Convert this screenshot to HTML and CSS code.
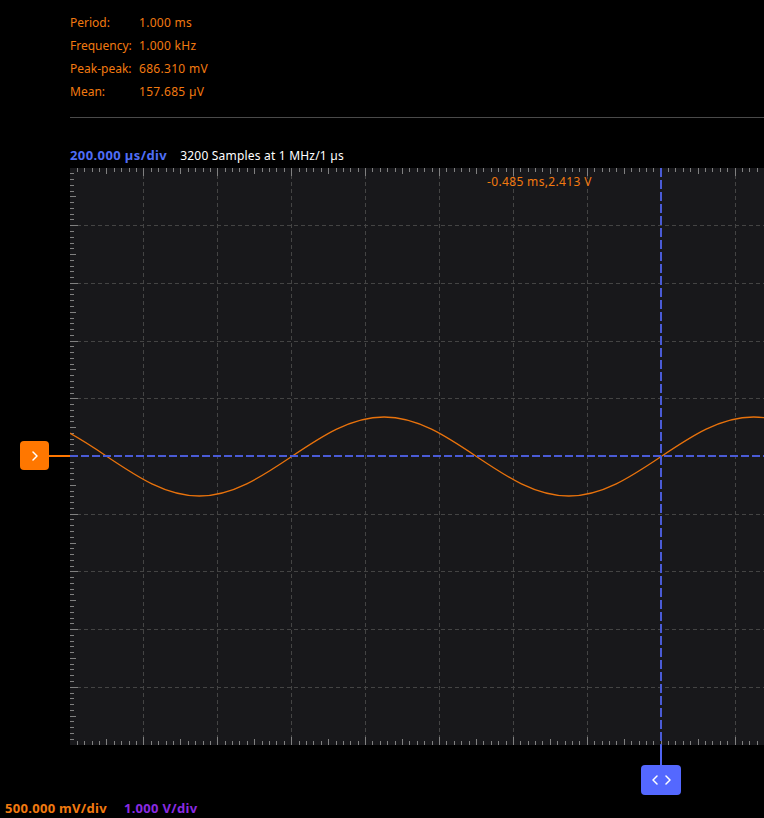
FILE: index.html
```html
<!DOCTYPE html>
<html>
<head>
<meta charset="utf-8">
<link rel="stylesheet" href="styles.css">
</head>
<body>
<div class="app">
  <dl class="measures">
    <dt>Period:</dt><dd>1.000 ms</dd>
    <dt>Frequency:</dt><dd>1.000 kHz</dd>
    <dt>Peak-peak:</dt><dd>686.310 mV</dd>
    <dt>Mean:</dt><dd>157.685 µV</dd>
  </dl>
  <div class="sep"></div>
  <div class="scale-row">
    <span class="tdiv">200.000 µs/div</span>
    <span class="samples">3200 Samples at 1 MHz/1 µs</span>
  </div>
  <div class="scope">
    <svg class="plot" width="764" height="630" viewBox="0 0 764 630">
      <defs>
        <clipPath id="pc"><rect x="70" y="0" width="694" height="577"/></clipPath>
      </defs>
      <rect class="bg" x="70" y="0" width="694" height="577"/>
      <path class="grid" d="M143.9,0V577 M217.8,0V577 M291.7,0V577 M365.6,0V577 M439.5,0V577 M513.4,0V577 M587.3,0V577 M735.1,0V577"/>
      <path class="grid" d="M70,57.7H764 M70,115.4H764 M70,173.1H764 M70,230.8H764 M70,346.2H764 M70,403.9H764 M70,461.6H764 M70,519.3H764"/>
      <path class="ticks" d="M70,0
        m7.39,0 v4 m7.39,-4 v4 m7.39,-4 v4 m7.39,-4 v4 m7.39,-4 v6 m7.39,-6 v4 m7.39,-4 v4 m7.39,-4 v4 m7.39,-4 v4 m7.39,-4 v8 m0,-8
        m7.39,0 v4 m7.39,-4 v4 m7.39,-4 v4 m7.39,-4 v4 m7.39,-4 v6 m7.39,-6 v4 m7.39,-4 v4 m7.39,-4 v4 m7.39,-4 v4 m7.39,-4 v8 m0,-8
        m7.39,0 v4 m7.39,-4 v4 m7.39,-4 v4 m7.39,-4 v4 m7.39,-4 v6 m7.39,-6 v4 m7.39,-4 v4 m7.39,-4 v4 m7.39,-4 v4 m7.39,-4 v8 m0,-8
        m7.39,0 v4 m7.39,-4 v4 m7.39,-4 v4 m7.39,-4 v4 m7.39,-4 v6 m7.39,-6 v4 m7.39,-4 v4 m7.39,-4 v4 m7.39,-4 v4 m7.39,-4 v8 m0,-8
        m7.39,0 v4 m7.39,-4 v4 m7.39,-4 v4 m7.39,-4 v4 m7.39,-4 v6 m7.39,-6 v4 m7.39,-4 v4 m7.39,-4 v4 m7.39,-4 v4 m7.39,-4 v8 m0,-8
        m7.39,0 v4 m7.39,-4 v4 m7.39,-4 v4 m7.39,-4 v4 m7.39,-4 v6 m7.39,-6 v4 m7.39,-4 v4 m7.39,-4 v4 m7.39,-4 v4 m7.39,-4 v8 m0,-8
        m7.39,0 v4 m7.39,-4 v4 m7.39,-4 v4 m7.39,-4 v4 m7.39,-4 v6 m7.39,-6 v4 m7.39,-4 v4 m7.39,-4 v4 m7.39,-4 v4 m7.39,-4 v8 m0,-8
        m7.39,0 v4 m7.39,-4 v4 m7.39,-4 v4 m7.39,-4 v4 m7.39,-4 v6 m7.39,-6 v4 m7.39,-4 v4 m7.39,-4 v4 m7.39,-4 v4 m7.39,-4 v8 m0,-8
        m7.39,0 v4 m7.39,-4 v4 m7.39,-4 v4 m7.39,-4 v4 m7.39,-4 v6 m7.39,-6 v4 m7.39,-4 v4 m7.39,-4 v4 m7.39,-4 v4 m7.39,-4 v8 m0,-8
        m7.39,0 v4 m7.39,-4 v4 m7.39,-4 v4 m7.39,-4 v4"/>
      <path class="ticks" d="M70,577
        m7.39,0 v-4 m7.39,4 v-4 m7.39,4 v-4 m7.39,4 v-4 m7.39,4 v-6 m7.39,6 v-4 m7.39,4 v-4 m7.39,4 v-4 m7.39,4 v-4 m7.39,4 v-8 m0,8
        m7.39,0 v-4 m7.39,4 v-4 m7.39,4 v-4 m7.39,4 v-4 m7.39,4 v-6 m7.39,6 v-4 m7.39,4 v-4 m7.39,4 v-4 m7.39,4 v-4 m7.39,4 v-8 m0,8
        m7.39,0 v-4 m7.39,4 v-4 m7.39,4 v-4 m7.39,4 v-4 m7.39,4 v-6 m7.39,6 v-4 m7.39,4 v-4 m7.39,4 v-4 m7.39,4 v-4 m7.39,4 v-8 m0,8
        m7.39,0 v-4 m7.39,4 v-4 m7.39,4 v-4 m7.39,4 v-4 m7.39,4 v-6 m7.39,6 v-4 m7.39,4 v-4 m7.39,4 v-4 m7.39,4 v-4 m7.39,4 v-8 m0,8
        m7.39,0 v-4 m7.39,4 v-4 m7.39,4 v-4 m7.39,4 v-4 m7.39,4 v-6 m7.39,6 v-4 m7.39,4 v-4 m7.39,4 v-4 m7.39,4 v-4 m7.39,4 v-8 m0,8
        m7.39,0 v-4 m7.39,4 v-4 m7.39,4 v-4 m7.39,4 v-4 m7.39,4 v-6 m7.39,6 v-4 m7.39,4 v-4 m7.39,4 v-4 m7.39,4 v-4 m7.39,4 v-8 m0,8
        m7.39,0 v-4 m7.39,4 v-4 m7.39,4 v-4 m7.39,4 v-4 m7.39,4 v-6 m7.39,6 v-4 m7.39,4 v-4 m7.39,4 v-4 m7.39,4 v-4 m7.39,4 v-8 m0,8
        m7.39,0 v-4 m7.39,4 v-4 m7.39,4 v-4 m7.39,4 v-4 m7.39,4 v-6 m7.39,6 v-4 m7.39,4 v-4 m7.39,4 v-4 m7.39,4 v-4 m7.39,4 v-8 m0,8
        m7.39,0 v-4 m7.39,4 v-4 m7.39,4 v-4 m7.39,4 v-4 m7.39,4 v-6 m7.39,6 v-4 m7.39,4 v-4 m7.39,4 v-4 m7.39,4 v-4 m7.39,4 v-8 m0,8
        m7.39,0 v-4 m7.39,4 v-4 m7.39,4 v-4 m7.39,4 v-4"/>
      <path class="ticks" d="M70,0
        m0,5.77 h4 m-4,5.77 h4 m-4,5.77 h4 m-4,5.77 h4 m-4,5.77 h6 m-6,5.77 h4 m-4,5.77 h4 m-4,5.77 h4 m-4,5.77 h4 m-4,5.77 h8 m-8,0
        m0,5.77 h4 m-4,5.77 h4 m-4,5.77 h4 m-4,5.77 h4 m-4,5.77 h6 m-6,5.77 h4 m-4,5.77 h4 m-4,5.77 h4 m-4,5.77 h4 m-4,5.77 h8 m-8,0
        m0,5.77 h4 m-4,5.77 h4 m-4,5.77 h4 m-4,5.77 h4 m-4,5.77 h6 m-6,5.77 h4 m-4,5.77 h4 m-4,5.77 h4 m-4,5.77 h4 m-4,5.77 h8 m-8,0
        m0,5.77 h4 m-4,5.77 h4 m-4,5.77 h4 m-4,5.77 h4 m-4,5.77 h6 m-6,5.77 h4 m-4,5.77 h4 m-4,5.77 h4 m-4,5.77 h4 m-4,5.77 h8 m-8,0
        m0,5.77 h4 m-4,5.77 h4 m-4,5.77 h4 m-4,5.77 h4 m-4,5.77 h6 m-6,5.77 h4 m-4,5.77 h4 m-4,5.77 h4 m-4,5.77 h4 m-4,5.77 h8 m-8,0
        m0,5.77 h4 m-4,5.77 h4 m-4,5.77 h4 m-4,5.77 h4 m-4,5.77 h6 m-6,5.77 h4 m-4,5.77 h4 m-4,5.77 h4 m-4,5.77 h4 m-4,5.77 h8 m-8,0
        m0,5.77 h4 m-4,5.77 h4 m-4,5.77 h4 m-4,5.77 h4 m-4,5.77 h6 m-6,5.77 h4 m-4,5.77 h4 m-4,5.77 h4 m-4,5.77 h4 m-4,5.77 h8 m-8,0
        m0,5.77 h4 m-4,5.77 h4 m-4,5.77 h4 m-4,5.77 h4 m-4,5.77 h6 m-6,5.77 h4 m-4,5.77 h4 m-4,5.77 h4 m-4,5.77 h4 m-4,5.77 h8 m-8,0
        m0,5.77 h4 m-4,5.77 h4 m-4,5.77 h4 m-4,5.77 h4 m-4,5.77 h6 m-6,5.77 h4 m-4,5.77 h4 m-4,5.77 h4 m-4,5.77 h4 m-4,5.77 h8 m-8,0
        m0,5.77 h4 m-4,5.77 h4 m-4,5.77 h4 m-4,5.77 h4 m-4,5.77 h6 m-6,5.77 h4 m-4,5.77 h4 m-4,5.77 h4 m-4,5.77 h4"/>
      <g clip-path="url(#pc)">
        <path class="wave" d="M-77.8,288.5
          c30.13,-20.24 58.95,-39.5 92.375,-39.5 c33.42,0 62.24,19.26 92.375,39.5 c30.13,20.24 58.95,39.5 92.375,39.5 c33.42,0 62.24,-19.26 92.375,-39.5
          c30.13,-20.24 58.95,-39.5 92.375,-39.5 c33.42,0 62.24,19.26 92.375,39.5 c30.13,20.24 58.95,39.5 92.375,39.5 c33.42,0 62.24,-19.26 92.375,-39.5
          c30.13,-20.24 58.95,-39.5 92.375,-39.5 c33.42,0 62.24,19.26 92.375,39.5 c30.13,20.24 58.95,39.5 92.375,39.5 c33.42,0 62.24,-19.26 92.375,-39.5"/>
      </g>
      <path class="hcursor" d="M70,288H764"/>
      <path class="trig-line" d="M48,288H70"/>
      <path class="vcursor" d="M661,0V577"/>
      <path class="vcursor-solid" d="M661,577V598"/>
    </svg>
    <span class="readout">-0.485 ms,2.413 V</span>
    <button class="trig-marker" type="button" aria-label="Trigger level">
      <svg width="6" height="10" viewBox="0 0 6 10"><path d="M1,1 L5,5 L1,9"/></svg>
    </button>
    <button class="cursor-handle" type="button" aria-label="Time cursor">
      <svg width="6" height="10" viewBox="0 0 6 10"><path d="M5,1 L1,5 L5,9"/></svg>
      <svg width="6" height="10" viewBox="0 0 6 10"><path d="M1,1 L5,5 L1,9"/></svg>
    </button>
  </div>
  <div class="vdiv-row">
    <span class="ch1">500.000 mV/div</span>
    <span class="ch2">1.000 V/div</span>
  </div>
</div>
</body>
</html>
```
FILE: styles.css
```css
html, body {
  margin: 0;
  padding: 0;
  background: #000;
}
body {
  width: 764px;
  height: 818px;
  overflow: hidden;
  font-family: "Noto Sans", "Open Sans", sans-serif;
  font-size: 12px;
  color: #fff;
}
.app {
  display: flex;
  flex-direction: column;
}
.measures {
  margin: 0;
  padding: 11px 0 0 70px;
  display: grid;
  grid-template-columns: 69px auto;
  line-height: 23px;
  color: #f27a10;
}
.measures dt, .measures dd {
  margin: 0;
}
.measures dd {
  letter-spacing: 0.3px;
}
.sep {
  margin: 14px 0 0 70px;
  height: 1px;
  background: #4a4a4a;
}
.scale-row {
  margin-top: 29px;
  padding-left: 70px;
  height: 16px;
  display: flex;
  align-items: baseline;
  gap: 13px;
  line-height: 16px;
}
.tdiv {
  font-size: 13px;
  letter-spacing: 0.4px;
  font-weight: 700;
  color: #4f6ef7;
}
.samples {
  letter-spacing: 0.2px;
  color: #fff;
}
.scope {
  position: relative;
  margin-top: 5px;
  height: 630px;
}
.plot {
  display: block;
}
.plot .bg {
  fill: #18181b;
}
.plot .grid {
  fill: none;
  stroke: #444;
  stroke-width: 1;
  stroke-dasharray: 4 3;
  shape-rendering: crispEdges;
}
.plot .ticks {
  fill: none;
  stroke: #808080;
  stroke-width: 1;
  shape-rendering: crispEdges;
}
.plot .wave {
  fill: none;
  stroke: #e8720c;
  stroke-width: 1.3;
}
.plot .hcursor {
  fill: none;
  stroke: #4a5bd6;
  stroke-width: 2;
  stroke-dasharray: 8 3;
}
.plot .vcursor {
  fill: none;
  stroke: #4a5bd6;
  stroke-width: 2;
  stroke-dasharray: 9 3;
}
.plot .vcursor-solid {
  fill: none;
  stroke: #4f63f2;
  stroke-width: 2;
}
.plot .trig-line {
  fill: none;
  stroke: #ff7700;
  stroke-width: 2;
}
.readout {
  position: absolute;
  left: 487px;
  top: 6px;
  line-height: 16px;
  letter-spacing: 0.35px;
  color: #f27a10;
}
.trig-marker {
  position: absolute;
  left: 20px;
  top: 273px;
  width: 29px;
  height: 29px;
  padding: 0;
  border: none;
  border-radius: 4px;
  background: #ff7700;
  display: flex;
  align-items: center;
  justify-content: center;
}
.cursor-handle {
  position: absolute;
  left: 641px;
  top: 597px;
  width: 40px;
  height: 30px;
  padding: 0;
  border: none;
  border-radius: 4px;
  background: #5468ff;
  display: flex;
  align-items: center;
  justify-content: center;
  gap: 7px;
}
.trig-marker svg path, .cursor-handle svg path {
  fill: none;
  stroke: #fff;
  stroke-width: 1.5;
  stroke-linecap: round;
  stroke-linejoin: round;
}
.trig-marker svg, .cursor-handle svg {
  display: block;
}
.vdiv-row {
  margin-top: 2px;
  padding-left: 5px;
  display: flex;
  gap: 17px;
  line-height: 17px;
  font-size: 13px;
  letter-spacing: 0.3px;
  font-weight: 700;
}
.ch1 {
  color: #f27a10;
}
.ch2 {
  color: #8a2be2;
}
```
